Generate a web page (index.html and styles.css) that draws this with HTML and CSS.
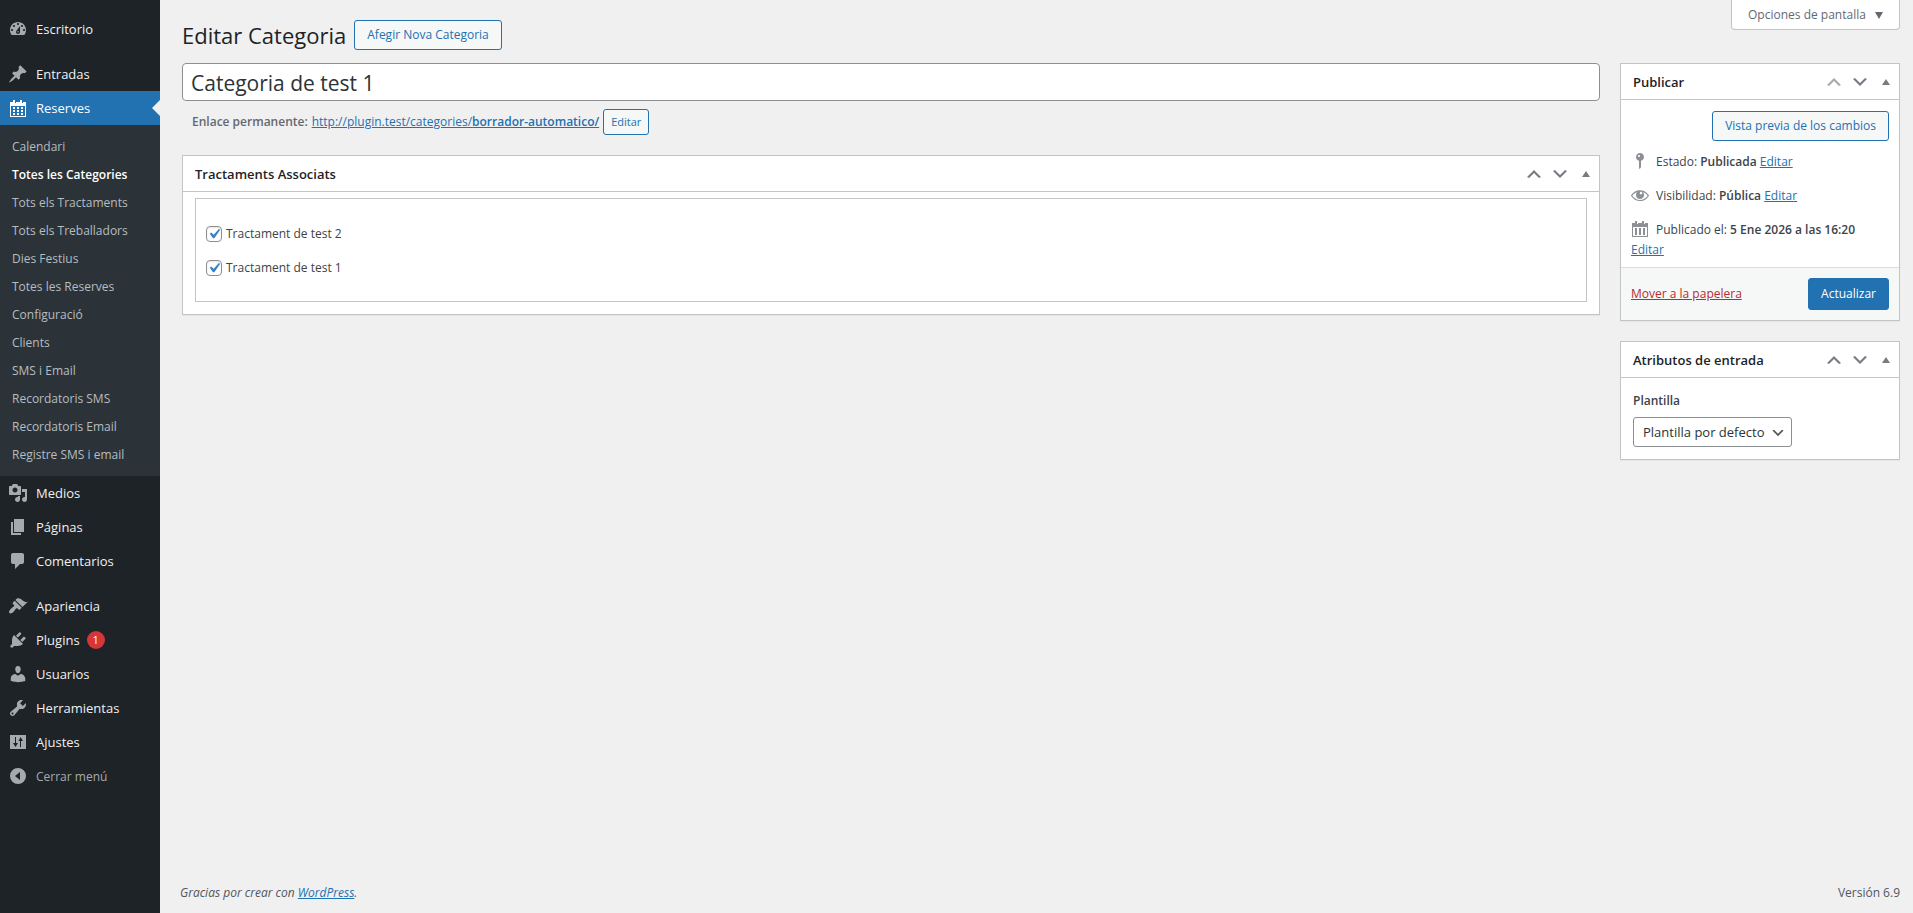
FILE: index.html
```html
<!DOCTYPE html>
<html lang="es">
<head>
    <meta charset="utf-8" />
    <meta name="viewport" content="width=device-width, initial-scale=1" />
    <title>Editar Categoria</title>
    <link rel="stylesheet" href="styles.css">
</head>
<body>
    <!-- iconos compartidos -->
    <svg class="sprite" aria-hidden="true">
        <symbol id="i-up" viewBox="0 0 20 20"><path d="M15 14l-5-5-5 5-2-1 7-7 7 7z"/></symbol>
        <symbol id="i-down" viewBox="0 0 20 20"><path d="M5 6l5 5 5-5 2 1-7 7-7-7z"/></symbol>
        <symbol id="i-toggle" viewBox="0 0 20 20"><path d="M6 13l4-6 4 6z"/></symbol>
    </svg>

    <div class="wrap">
        <nav class="menu">
            <ul class="menu-list">
                <li><a href="#" class="item"><svg class="icon" viewBox="0 0 20 20"><path fill-rule="evenodd" d="M3.76 16h12.48c1.1-1.37 1.76-3.11 1.76-5 0-4.42-3.58-8-8-8s-8 3.58-8 8c0 1.89.66 3.63 1.76 5zM10 4c.55 0 1 .45 1 1s-.45 1-1 1-1-.45-1-1 .45-1 1-1zM6 6c.55 0 1 .45 1 1s-.45 1-1 1-1-.45-1-1 .45-1 1-1zm8 0c.55 0 1 .45 1 1s-.45 1-1 1-1-.45-1-1 .45-1 1-1zm-5.37 5.55L12 7v6c0 1.1-.9 2-2 2s-2-.9-2-2c0-.57.24-1.08.63-1.45zM4 10c.55 0 1 .45 1 1s-.45 1-1 1-1-.45-1-1 .45-1 1-1zm12 0c.55 0 1 .45 1 1s-.45 1-1 1-1-.45-1-1 .45-1 1-1zm-6 3.5a.7.7 0 1 0 0-1.400.7.7 0 0 0 0 1.400z"/></svg>Escritorio</a></li>
                <li class="separator"></li>
                <li><a href="#" class="item"><svg class="icon" viewBox="0 0 20 20"><path d="M10.44 3.02l1.82-1.82 6.36 6.35-1.83 1.82c-1.05-.68-2.48-.57-3.41.36l-.75.75c-.92.93-1.04 2.35-.35 3.41l-1.83 1.82-2.41-2.41-2.8 2.79c-.42.42-3.38 2.71-3.8 2.29s1.86-3.39 2.28-3.81l2.79-2.79L4.1 9.36l1.83-1.82c1.05.69 2.48.57 3.4-.36l.75-.75c.93-.92 1.05-2.35.36-3.41z"/></svg>Entradas</a></li>
                <li>
                    <a href="#" class="item current"><svg class="icon" viewBox="0 0 20 20"><path fill-rule="evenodd" d="M2 4h3V2h2v3h1V4h4V2h2v3h1V4h3v15H2zM3 8v10h14V8zM5 9h2v2H5zm4 0h2v2H9zm4 0h2v2h-2zM5 12h2v2H5zm4 0h2v2H9zm4 0h2v2h-2zM5 15h2v2H5zm4 0h2v2H9zm4 0h2v2h-2z"/></svg>Reserves</a>
                    <ul class="submenu">
                        <li><a href="#">Calendari</a></li>
                        <li><a href="#" class="active">Totes les Categories</a></li>
                        <li><a href="#">Tots els Tractaments</a></li>
                        <li><a href="#">Tots els Treballadors</a></li>
                        <li><a href="#">Dies Festius</a></li>
                        <li><a href="#">Totes les Reserves</a></li>
                        <li><a href="#">Configuració</a></li>
                        <li><a href="#">Clients</a></li>
                        <li><a href="#">SMS i Email</a></li>
                        <li><a href="#">Recordatoris SMS</a></li>
                        <li><a href="#">Recordatoris Email</a></li>
                        <li><a href="#">Registre SMS i email</a></li>
                    </ul>
                </li>
                <li><a href="#" class="item"><svg class="icon" viewBox="0 0 20 20"><path fill-rule="evenodd" d="M13 11V4c0-.55-.45-1-1-1h-1.670L9 1H5L3.670 3H2c-.55 0-1 .45-1 1v7c0 .55.45 1 1 1h10c.55 0 1-.45 1-1zM7 4.500c1.380 0 2.500 1.120 2.500 2.500S8.380 9.500 7 9.500 4.500 8.380 4.500 7 5.620 4.500 7 4.500zM14 6h5v10.500c0 1.380-1.120 2.500-2.500 2.500S14 17.880 14 16.500s1.120-2.500 2.500-2.500c.17 0 .34.02.5.05V9h-3V6zm-4 8.050V13h2v3.500c0 1.380-1.120 2.500-2.500 2.500S7 17.880 7 16.500 8.120 14 9.500 14c.17 0 .34.02.5.05z"/></svg>Medios</a></li>
                <li><a href="#" class="item"><svg class="icon" viewBox="0 0 20 20"><path d="M6 15V2h10v13H6zm-1 1h8v2H3V5h2v11z"/></svg>Páginas</a></li>
                <li><a href="#" class="item"><svg class="icon" viewBox="0 0 20 20"><path d="M5 2h9c1.1 0 2 .9 2 2v7c0 1.1-.9 2-2 2h-2l-5 5v-5H5c-1.1 0-2-.9-2-2V4c0-1.1.9-2 2-2z"/></svg>Comentarios</a></li>
                <li class="separator"></li>
                <li><a href="#" class="item"><svg class="icon" viewBox="0 0 20 20"><path d="M14.48 11.06L7.41 3.99l1.500-1.500c.5-.56 2.300-.47 3.510.32 1.210.8 1.430 1.280 2.910 2.100 1.180.64 2.450 1.260 4.450.85zm-.71.71L6.700 4.700 4.930 6.470c-.39.39-.39 1.020 0 1.410l1.060 1.060c.39.39.39 1.030 0 1.420-.6.6-1.430 1.110-2.210 1.690-.35.26-.7.53-1.010.84C1.430 14.230.4 16.080 1.400 17.070c.99 1 2.840-.03 4.180-1.360.31-.31.58-.66.85-1.020.57-.78 1.080-1.610 1.690-2.210.39-.39 1.020-.39 1.410 0l1.060 1.060c.39.39 1.020.39 1.410 0z"/></svg>Apariencia</a></li>
                <li><a href="#" class="item"><svg class="icon" viewBox="0 0 20 20"><path d="M13.11 4.36L9.87 7.600 8 5.730l3.240-3.240c.35-.34 1.050-.2 1.560.32.52.51.66 1.210.31 1.550zm-8 1.770l.91-1.120 9.010 9.010-1.190.84c-.71.71-2.630 1.160-3.820 1.160H6.140L4.900 17.260c-.59.59-1.540.59-2.120 0-.59-.58-.59-1.530 0-2.120l1.240-1.240v-3.880c0-1.130.4-3.190 1.090-3.890zm7.260 3.970l3.240-3.240c.34-.35 1.040-.21 1.550.31.52.51.66 1.210.31 1.550l-3.240 3.250z"/></svg>Plugins <span class="badge">1</span></a></li>
                <li><a href="#" class="item"><svg class="icon" viewBox="0 0 20 20"><path d="M10 9.250c-2.270 0-2.730-3.440-2.730-3.440C7 4.020 7.820 2 9.970 2c2.160 0 2.980 2.020 2.710 3.810 0 0-.41 3.440-2.680 3.440zm0 2.570L12.720 10c2.390 0 4.520 2.330 4.520 4.530v2.490s-3.650 1.130-7.240 1.130c-3.650 0-7.240-1.130-7.240-1.130v-2.490c0-2.250 1.940-4.480 4.470-4.480z"/></svg>Usuarios</a></li>
                <li><a href="#" class="item"><svg class="icon" viewBox="0 0 20 20"><path fill-rule="evenodd" d="M16.68 9.770c-1.340 1.340-3.300 1.670-4.950.99l-5.410 6.520c-.99.99-2.590.99-3.580 0s-.99-2.590 0-3.570l6.520-5.420c-.68-1.650-.35-3.610.99-4.950 1.280-1.280 3.120-1.620 4.720-1.060l-2.890 2.890 2.820 2.820 2.860-2.870c.53 1.580.18 3.390-1.080 4.650zM3.810 16.210c.4.39 1.040.39 1.430 0 .4-.4.4-1.040 0-1.430-.39-.4-1.030-.4-1.430 0-.39.39-.39 1.030 0 1.430z"/></svg>Herramientas</a></li>
                <li><a href="#" class="item"><svg class="icon" viewBox="0 0 20 20"><path fill-rule="evenodd" d="M2 3h16v14H2zM7 5v6H5l2.500 4L10 11H8V5zm5 10h1V9h2l-2.500-4L10.500 9H12z"/></svg>Ajustes</a></li>
                <li><button type="button" class="item collapse"><svg class="icon" viewBox="0 0 20 20"><path fill-rule="evenodd" d="M10 2a8 8 0 1 1 0 16 8 8 0 0 1 0-16zm2 4l-5 4 5 4z"/></svg>Cerrar menú</button></li>
            </ul>
        </nav>

        <div class="content">
            <header class="top">
                <h1>Editar Categoria</h1>
                <a href="#" class="button">Afegir Nova Categoria</a>
                <button type="button" class="screen-options">Opciones de pantalla <svg class="caret" viewBox="0 0 8 7"><path d="M0 0h8L4 7z"/></svg></button>
            </header>

            <form class="columns" action="" method="post">
                <main class="main">
                    <input type="text" class="title" name="post_title" aria-label="Título" value="Categoria de test 1" />
                    <div class="permalink">
                        <strong>Enlace permanente:</strong>
                        <a href="#">http://plugin.test/categories/<b>borrador-automatico/</b></a>
                        <button type="button" class="button small">Editar</button>
                    </div>

                    <section class="box">
                        <div class="box-header">
                            <h2>Tractaments Associats</h2>
                            <button type="button" class="handle" aria-label="Subir"><svg><use href="#i-up"/></svg></button>
                            <button type="button" class="handle" aria-label="Bajar"><svg><use href="#i-down"/></svg></button>
                            <button type="button" class="handle last" aria-label="Plegar"><svg><use href="#i-toggle"/></svg></button>
                        </div>
                        <div class="inside">
                            <div class="checks">
                                <label><input type="checkbox" checked />Tractament de test 2</label>
                                <label><input type="checkbox" checked />Tractament de test 1</label>
                            </div>
                        </div>
                    </section>
                </main>

                <aside class="side">
                    <section class="box">
                        <div class="box-header">
                            <h2>Publicar</h2>
                            <button type="button" class="handle" aria-label="Subir" disabled><svg><use href="#i-up"/></svg></button>
                            <button type="button" class="handle" aria-label="Bajar"><svg><use href="#i-down"/></svg></button>
                            <button type="button" class="handle last" aria-label="Plegar"><svg><use href="#i-toggle"/></svg></button>
                        </div>
                        <div class="preview">
                            <a href="#" class="button">Vista previa de los cambios</a>
                        </div>
                        <div class="misc"><svg class="misc-icon" viewBox="0 0 20 20"><path fill-rule="evenodd" d="M14 6c0 1.860-1.280 3.410-3 3.860V16c0 1-2 2-2 2V9.860c-1.720-.45-3-2-3-3.860 0-2.210 1.790-4 4-4s4 1.790 4 4zM8 5c0 .55.45 1 1 1s1-.45 1-1-.45-1-1-1-1 .45-1 1z"/></svg>Estado: <b>Publicada</b> <a href="#">Editar</a></div>
                        <div class="misc"><svg class="misc-icon" viewBox="0 0 20 20"><path fill-rule="evenodd" d="M18.300 9.500C15 4.900 8.500 3.800 3.900 7.200c-1.200.9-2.200 2.100-3 3.400.2.4.5.8.8 1.200 3.300 4.600 9.600 5.600 14.200 2.400.9-.7 1.700-1.400 2.400-2.400.3-.4.5-.8.8-1.200-.3-.4-.5-.8-.8-1.100zm-8.200-2.300c.5-.5 1.300-.5 1.800 0s.5 1.300 0 1.800-1.300.5-1.800 0-.5-1.300 0-1.800zm-.1 7.700c-3.100 0-6-1.600-7.700-4.200C3.500 9 5.100 7.800 7 7.200c-.7.8-1 1.700-1 2.700 0 2.200 1.700 4.100 4 4.100 2.200 0 4.100-1.700 4.100-4v-.1c0-1-.4-2-1.100-2.700 1.900.6 3.500 1.800 4.700 3.500-1.700 2.600-4.600 4.200-7.700 4.200z"/></svg>Visibilidad: <b>Pública</b> <a href="#">Editar</a></div>
                        <div class="misc misc-date"><svg class="misc-icon" viewBox="0 0 20 20"><path fill-rule="evenodd" d="M2 4h3V2h2v3h1V4h4V2h2v3h1V4h3v14H2zM3 8v9h14V8zM5 9h2v7H5zm4 0h2v7H9zm4 0h2v7h-2z"/></svg>Publicado el: <b>5 Ene 2026 a las 16:20</b> <a href="#">Editar</a></div>
                        <div class="actions">
                            <a href="#" class="delete">Mover a la papelera</a>
                            <button type="submit" class="button primary">Actualizar</button>
                        </div>
                    </section>

                    <section class="box">
                        <div class="box-header">
                            <h2>Atributos de entrada</h2>
                            <button type="button" class="handle" aria-label="Subir"><svg><use href="#i-up"/></svg></button>
                            <button type="button" class="handle" aria-label="Bajar"><svg><use href="#i-down"/></svg></button>
                            <button type="button" class="handle last" aria-label="Plegar"><svg><use href="#i-toggle"/></svg></button>
                        </div>
                        <div class="attributes">
                            <label for="plantilla">Plantilla</label>
                            <select id="plantilla" name="page_template">
                                <option>Plantilla por defecto</option>
                            </select>
                        </div>
                    </section>
                </aside>
            </form>

            <footer class="footer">
                <em>Gracias por crear con <a href="#">WordPress</a>.</em>
                <span>Versión 6.9</span>
            </footer>
        </div>
    </div>
</body>
</html>
```
FILE: styles.css
```css
*
{
    box-sizing: border-box;
    margin: 0;
    padding: 0;
}

body
{
    background: #f0f0f1;
    color: #3c434a;
    font-family: "Open Sans", "Noto Sans", sans-serif;
    font-size: 12px;
    line-height: 20px;
}

ul
{
    list-style: none;
}

a
{
    color: #2271b1;
}

b, strong
{
    font-weight: 600;
}

button, input, select
{
    font-family: inherit;
}

button
{
    cursor: pointer;
}

svg
{
    fill: currentColor;
}

.sprite
{
    display: none;
}

.wrap
{
    display: flex;
    min-height: 100vh;
}

/* menu lateral */
.menu
{
    background: #1d2327;
    flex: 0 0 160px;
    padding-top: 12px;
}

.item
{
    align-items: center;
    color: #f0f0f1;
    display: flex;
    font-size: 13px;
    height: 34px;
    padding-left: 8px;
    text-decoration: none;
    width: 100%;
}

.icon
{
    color: #a7aaad;
    height: 20px;
    margin-right: 8px;
    width: 20px;
}

.separator
{
    height: 11px;
}

.current
{
    background: #2271b1;
    color: white;
    position: relative;
}

.current .icon
{
    color: white;
}

.current::after
{
    border: 8px solid transparent;
    border-right-color: #f0f0f1;
    content: "";
    position: absolute;
    right: 0;
    top: 9px;
}

.submenu
{
    background: #2c3338;
    padding: 8px 0 7px;
}

.submenu a
{
    color: #b5bcc2;
    display: block;
    line-height: 18px;
    padding: 5px 12px;
    text-decoration: none;
}

.submenu .active
{
    color: white;
    font-weight: 600;
}

.badge
{
    background: #d63638;
    border-radius: 9px;
    color: white;
    font-size: 11px;
    height: 18px;
    line-height: 18px;
    margin-left: 7px;
    text-align: center;
    width: 18px;
}

.collapse
{
    background: none;
    border: 0;
    color: #a7aaad;
    font-size: 12px;
}

/* contenido */
.content
{
    display: flex;
    flex: 1;
    flex-direction: column;
    min-width: 0;
    padding: 0 13px 0 22px;
}

.top
{
    align-items: flex-end;
    display: flex;
    gap: 8px;
    height: 50px;
    margin-bottom: 13px;
}

h1
{
    color: #1d2327;
    font-size: 22px;
    font-weight: 400;
    line-height: 30px;
}

.button
{
    background: #f6f7f7;
    border: 1px solid #2271b1;
    border-radius: 3px;
    color: #2271b1;
    display: inline-block;
    font-size: 12px;
    line-height: 28px;
    padding: 0 12px;
    text-decoration: none;
    white-space: nowrap;
}

.small
{
    font-size: 11px;
    line-height: 24px;
    padding: 0 7px;
}

.primary
{
    background: #2271b1;
    color: white;
    line-height: 30px;
}

.screen-options
{
    align-self: flex-start;
    background: white;
    border: 1px solid #c3c4c7;
    border-radius: 0 0 4px 4px;
    border-top: 0;
    color: #646970;
    font-size: 12px;
    height: 30px;
    margin-left: auto;
    padding: 0 16px;
}

.caret
{
    height: 7px;
    margin-left: 6px;
    width: 8px;
}

.columns
{
    align-items: flex-start;
    display: flex;
    gap: 20px;
}

.main
{
    flex: 1;
    min-width: 0;
}

.side
{
    flex: 0 0 280px;
}

.title
{
    background: white;
    border: 1px solid #8c8f94;
    border-radius: 4px;
    color: #2c3338;
    font-size: 21px;
    height: 38px;
    padding: 2px 8px 0;
    width: 100%;
}

.permalink
{
    align-items: center;
    color: #646970;
    display: flex;
    gap: 4px;
    margin: 8px 10px 20px;
}

.box
{
    background: white;
    border: 1px solid #c3c4c7;
    box-shadow: 0 1px 1px rgba(0,0,0,.04);
    margin-bottom: 20px;
}

.box-header
{
    align-items: center;
    border-bottom: 1px solid #c3c4c7;
    display: flex;
    height: 36px;
    padding-left: 12px;
}

h2
{
    color: #1d2327;
    flex: 1;
    font-size: 13px;
    font-weight: 600;
}

.handle
{
    background: none;
    border: 0;
    color: #787c82;
    height: 20px;
    width: 26px;
}

.handle:disabled
{
    color: #a7aaad;
}

.handle svg
{
    display: block;
    height: 20px;
    margin: 0 auto;
    width: 20px;
}

.inside
{
    padding: 6px 12px 12px;
}

.checks
{
    border: 1px solid #c3c4c7;
    display: grid;
    gap: 14px;
    padding: 25px 10px 23px;
}

.checks label
{
    align-items: center;
    display: flex;
    gap: 4px;
}

input[type="checkbox"]
{
    appearance: none;
    background: white url('data:image/svg+xml,<svg xmlns="http://www.w3.org/2000/svg" viewBox="0 0 20 20"><path d="M14.830 4.890l1.340.94-5.810 8.380H9.020L5.780 9.670l1.340-1.250 2.570 2.400z" fill="%233582c4"/></svg>') center / 20px;
    border: 1px solid #8c8f94;
    border-radius: 4px;
    box-shadow: inset 0 1px 2px rgba(0,0,0,.1);
    height: 16px;
    width: 16px;
}

.preview
{
    padding: 11px 10px 5px;
    text-align: right;
}

.misc
{
    padding: 6px 10px 8px;
}

.misc-date
{
    padding-bottom: 7px;
}

.misc-icon
{
    color: #8c8f94;
    height: 20px;
    margin: -1px 6px 0 -1px;
    vertical-align: top;
    width: 20px;
}

.actions
{
    align-items: center;
    background: #f6f7f7;
    border-top: 1px solid #dcdcde;
    display: flex;
    justify-content: space-between;
    padding: 10px;
}

.delete
{
    color: #b32d2e;
}

.attributes
{
    padding: 13px 12px 12px;
}

.attributes label
{
    display: block;
    font-weight: 600;
    margin-bottom: 6px;
}

select
{
    appearance: none;
    background: white url('data:image/svg+xml,<svg xmlns="http://www.w3.org/2000/svg" viewBox="0 0 20 20"><path d="M5 6l5 5 5-5 2 1-7 7-7-7 2-1z" fill="%23555"/></svg>') no-repeat right 5px top 55% / 16px;
    border: 1px solid #8c8f94;
    border-radius: 3px;
    color: #2c3338;
    font-size: 13px;
    height: 30px;
    padding: 0 26px 0 9px;
}

.footer
{
    color: #50575e;
    display: flex;
    justify-content: space-between;
    margin: auto 0 0 -2px;
    padding-bottom: 10px;
}
```
